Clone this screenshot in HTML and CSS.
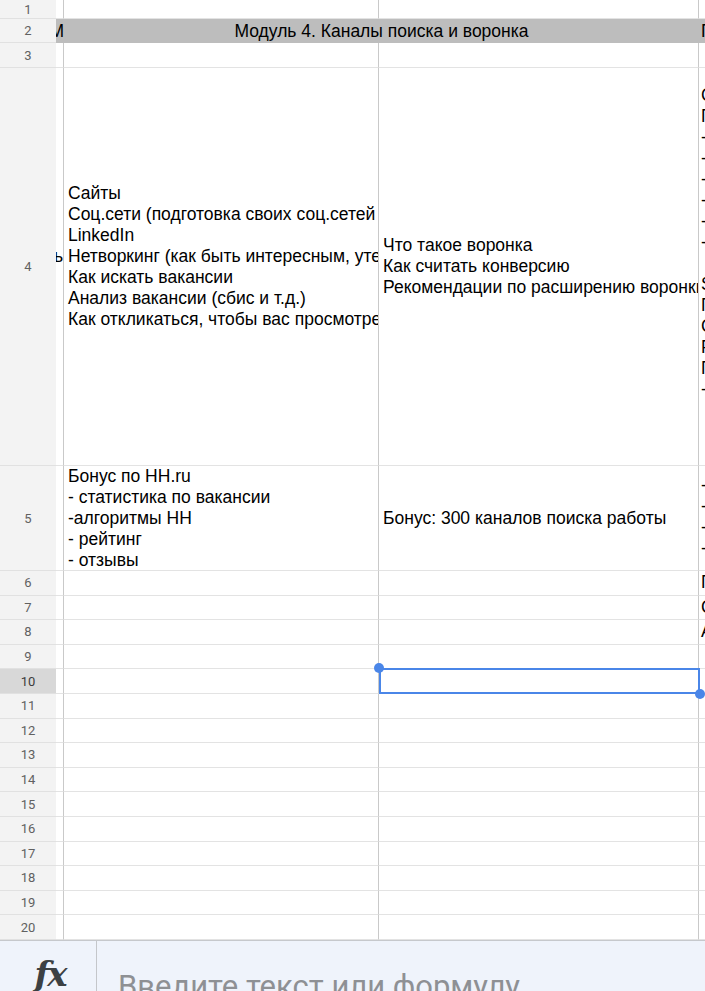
FILE: index.html
```html
<!DOCTYPE html>
<html lang="ru">
<head>
  <meta charset="UTF-8">
  <meta name="viewport" content="width=device-width, initial-scale=1.0">
  <link rel="stylesheet" href="styles.css">
</head>
<body>
<div class="sheet">
  <!-- row 1 -->
  <div class="rh">1</div>
  <div class="cell col-a"></div>
  <div class="cell"></div>
  <div class="cell"></div>
  <div class="cell col-d"></div>

  <!-- row 2: module title, merged -->
  <div class="rh">2</div>
  <div class="cell col-a title-row clip-right">М</div>
  <div class="cell merged title-row">Модуль 4. Каналы поиска и воронка</div>
  <div class="cell col-d title-row">Г</div>

  <!-- row 3 -->
  <div class="rh">3</div>
  <div class="cell col-a"></div>
  <div class="cell"></div>
  <div class="cell"></div>
  <div class="cell col-d"></div>

  <!-- row 4 -->
  <div class="rh">4</div>
  <div class="cell col-a clip-right extra-line">ь</div>
  <div class="cell extra-line">Сайты
Соц.сети (подготовка своих соц.сетей к поиску)
LinkedIn
Нетворкинг (как быть интересным, утеплять контакты)
Как искать вакансии
Анализ вакансии (сбис и т.д.)
Как откликаться, чтобы вас просмотрели</div>
  <div class="cell">Что такое воронка
Как считать конверсию
Рекомендации по расширению воронки</div>
  <div class="cell col-d top">Сопроводительное письмо
Правила
- структура
- тон
- длина
- ошибки
- примеры
- шаблоны

Soft skills
Портфолио
Сайт
Резюме
Профиль
- итоги</div>

  <!-- row 5 -->
  <div class="rh">5</div>
  <div class="cell col-a"></div>
  <div class="cell">Бонус по HH.ru
- статистика по вакансии
-алгоритмы HH
- рейтинг
- отзывы</div>
  <div class="cell">Бонус: 300 каналов поиска работы</div>
  <div class="cell col-d top tight">- шаблон
- чек-лист
- таблица
- разбор</div>

  <!-- rows 6-20 -->
  <div class="rh">6</div><div class="cell col-a"></div><div class="cell"></div><div class="cell"></div><div class="cell col-d">Практика</div>
  <div class="rh">7</div><div class="cell col-a"></div><div class="cell"></div><div class="cell"></div><div class="cell col-d">Созвон</div>
  <div class="rh">8</div><div class="cell col-a"></div><div class="cell"></div><div class="cell"></div><div class="cell col-d">Анализ</div>
  <div class="rh">9</div><div class="cell col-a"></div><div class="cell"></div><div class="cell"></div><div class="cell col-d"></div>
  <div class="rh active">10</div><div class="cell col-a"></div><div class="cell"></div>
  <div class="cell selected">
    <span class="handle handle-start"></span>
    <span class="handle handle-end"></span>
  </div>
  <div class="cell col-d"></div>
  <div class="rh">11</div><div class="cell col-a"></div><div class="cell"></div><div class="cell"></div><div class="cell col-d"></div>
  <div class="rh">12</div><div class="cell col-a"></div><div class="cell"></div><div class="cell"></div><div class="cell col-d"></div>
  <div class="rh">13</div><div class="cell col-a"></div><div class="cell"></div><div class="cell"></div><div class="cell col-d"></div>
  <div class="rh">14</div><div class="cell col-a"></div><div class="cell"></div><div class="cell"></div><div class="cell col-d"></div>
  <div class="rh">15</div><div class="cell col-a"></div><div class="cell"></div><div class="cell"></div><div class="cell col-d"></div>
  <div class="rh">16</div><div class="cell col-a"></div><div class="cell"></div><div class="cell"></div><div class="cell col-d"></div>
  <div class="rh">17</div><div class="cell col-a"></div><div class="cell"></div><div class="cell"></div><div class="cell col-d"></div>
  <div class="rh">18</div><div class="cell col-a"></div><div class="cell"></div><div class="cell"></div><div class="cell col-d"></div>
  <div class="rh">19</div><div class="cell col-a"></div><div class="cell"></div><div class="cell"></div><div class="cell col-d"></div>
  <div class="rh">20</div><div class="cell col-a"></div><div class="cell"></div><div class="cell"></div><div class="cell col-d"></div>
</div>

<div class="formula-bar">
  <div class="fx">fx</div>
  <div class="formula-input">Введите текст или формулу</div>
</div>
</body>
</html>
```

FILE: styles.css
```css
body {
  margin: 0;
  height: 991px;
  overflow: hidden;
  background-color: #fff;
  font-family: "Liberation Sans", Arial, sans-serif;
}

.sheet {
  display: grid;
  grid-template-columns: 56px 8px 315px 320px 1fr;
  grid-template-rows: 19px 24px 25px 398px 105px repeat(15, 24.6px);
  height: 940px;
  overflow: hidden;
}

/* row numbers on the left */
.rh {
  background-color: #f3f3f3;
  border-bottom: 1.5px solid #e1e1e1;
  box-sizing: border-box;
  display: flex;
  align-items: center;
  justify-content: center;
  font-family: Roboto, sans-serif;
  font-size: 13px;
  color: #616161;
}

.rh.active {
  background-color: #d8d8d8;
  color: #3c3c3c;
}

.cell {
  box-sizing: border-box;
  border-bottom: 1.5px solid #e3e3e3;
  border-right: 1px solid #c9c9c9;
  display: flex;
  align-items: center;
  padding-left: 4px;
  overflow: hidden;
  white-space: pre;
  font-size: 17.5px;
  line-height: 21px;
  color: #000;
}

/* cell text ends with an empty line */
.cell.extra-line {
  padding-bottom: 21px;
}

.cell.top {
  align-items: flex-start;
}

.col-a {
  padding-left: 0;
}

.col-d {
  border-right: none;
  padding-left: 2px;
}

.col-d.top {
  padding-top: 17px;
}

.col-d.tight {
  padding-top: 9px;
}

/* text that overflows from the hidden column A */
.clip-right {
  justify-content: flex-end;
}

.title-row {
  background-color: #bdbdbd;
  border-right: none;
  border-bottom: none;
}

.merged {
  grid-column: 3 / 5;
  justify-content: center;
  padding-left: 0;
}

.selected {
  position: relative;
  overflow: visible;
}

.selected::after {
  content: "";
  position: absolute;
  left: 0;
  top: -1px;
  right: -2px;
  bottom: -1px;
  border: 2px solid #4a86e8;
}

.handle {
  position: absolute;
  width: 10px;
  height: 10px;
  border-radius: 50%;
  background-color: #4a86e8;
  z-index: 1;
}

.handle-start {
  left: -5px;
  top: -6px;
}

.handle-end {
  right: -7px;
  bottom: -6px;
}

.formula-bar {
  height: 51px;
  box-sizing: border-box;
  border-top: 1.5px solid #c6c8cc;
  background-color: #eff3fb;
  display: flex;
  overflow: hidden;
}

.fx {
  width: 97px;
  border-right: 1px solid #c4c6ca;
  box-sizing: border-box;
  display: flex;
  justify-content: center;
  padding-top: 13px;
  padding-left: 4px;
  font-family: "DejaVu Serif", serif;
  font-style: italic;
  font-weight: bold;
  font-size: 34px;
  letter-spacing: -2px;
  color: #3c4043;
}

.formula-input {
  padding-left: 21px;
  padding-top: 27px;
  font-family: Roboto, sans-serif;
  font-size: 31px;
  color: #8e9094;
  white-space: nowrap;
}
```
